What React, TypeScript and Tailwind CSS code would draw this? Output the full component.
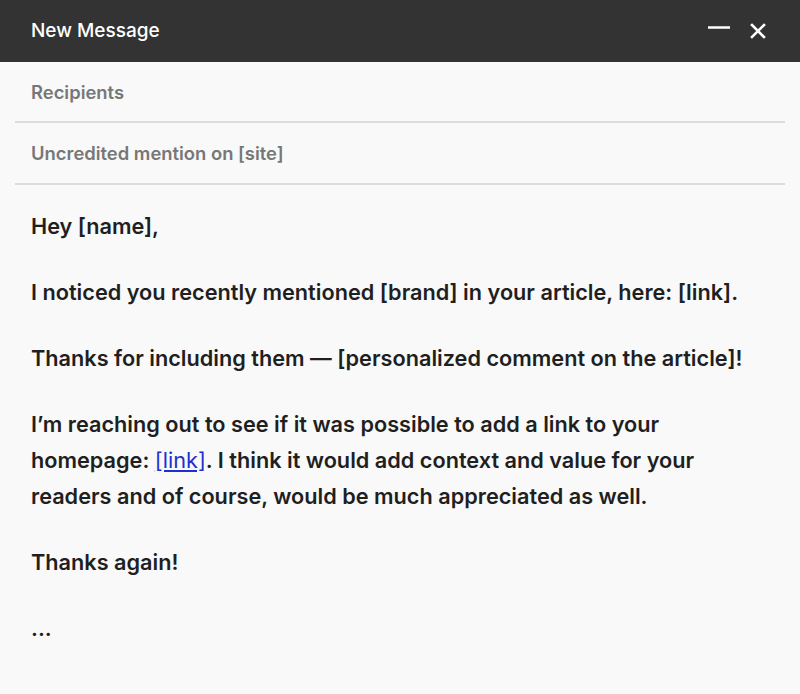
export default function App() {
  const font = { fontFamily: "Inter, 'Liberation Sans', sans-serif" };
  return (
    <div className="w-[800px] h-[694px] bg-[#f9f9f9] flex flex-col overflow-hidden" style={font}>
      <div className="h-[62px] bg-[#333333] flex items-center justify-between pl-[31px] pr-[34px] shrink-0">
        <span className="text-white text-[19px] font-medium">New Message</span>
        <div className="flex items-center gap-[20px]">
          <svg width="22" height="22" viewBox="0 0 22 22">
            <line x1="0" y1="7.5" x2="22" y2="7.5" stroke="white" strokeWidth="2.5" />
          </svg>
          <svg width="16" height="16" viewBox="0 0 16 16">
            <path d="M2 2 L14 14 M14 2 L2 14" stroke="white" strokeWidth="2.6" strokeLinecap="square" />
          </svg>
        </div>
      </div>
      <div className="px-[15px]">
        <div className="h-[61px] flex items-center pt-[2px] pl-[16px] border-b-2 border-[#dcdcdc] text-[#777777] text-[18.4px] font-semibold">
          Recipients
        </div>
        <div className="h-[62px] flex items-center pt-[2px] pl-[16px] border-b-2 border-[#dcdcdc] text-[#777777] text-[18.4px] font-semibold">
          Uncredited mention on [site]
        </div>
      </div>
      <div className="px-[31px] pt-[23px] text-[#1f1f1f] text-[21.7px] font-semibold leading-[36px] flex flex-col gap-[30px]">
        <p>Hey [name],</p>
        <p>I noticed you recently mentioned [brand] in your article, here: [link].</p>
        <p>Thanks for including them — [personalized comment on the article]!</p>
        <p className="w-[725px]">
          I’m reaching out to see if it was possible to add a link to your homepage:{" "}
          <a className="text-[#1f2fd0] underline font-normal" href="#">[link]</a>. I think it would add context and value for your readers and of course, would be much appreciated as well.
        </p>
        <p>Thanks again!</p>
        <p>...</p>
      </div>
    </div>
  );
}
